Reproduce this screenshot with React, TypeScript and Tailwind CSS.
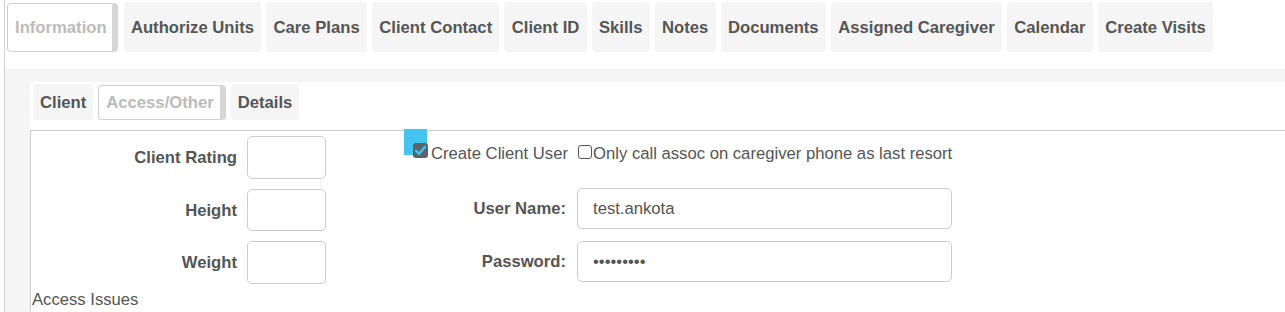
const topTabs = [
  'Information',
  'Authorize Units',
  'Care Plans',
  'Client Contact',
  'Client ID',
  'Skills',
  'Notes',
  'Documents',
  'Assigned Caregiver',
  'Calendar',
  'Create Visits',
];

const subTabs = ['Client', 'Access/Other', 'Details'];

function Tab({ label, active, tall }: { label: string; active: boolean; tall?: boolean }) {
  if (active) {
    return (
      <div
        className={`${tall ? 'h-[49px] pr-[5px] mr-[1px]' : 'h-[35px] pr-[6px]'} mt-[1px] flex items-center pl-[7px] bg-white rounded-[4px] border border-[#d0d0d0] border-r-[6px] border-r-[#d6d6d6] font-bold text-[#bbbbbb] whitespace-nowrap`}
      >
        {label}
      </div>
    );
  }
  return (
    <div
      className={`${tall ? 'h-[50px] px-[7.3px]' : 'h-[36px] px-[7px]'} flex items-center bg-[#f5f5f5] rounded-[4px] font-bold text-[#555555] whitespace-nowrap`}
    >
      {label}
    </div>
  );
}

function Checkbox({ checked }: { checked?: boolean }) {
  if (checked) {
    return (
      <span className="relative -top-[3px] inline-flex w-[15px] h-[15px] shrink-0">
        <span className="absolute left-[-9px] top-[-14px] w-[23px] h-[26px] bg-[#43c5f0]" />
        <span className="relative w-[15px] h-[15px] rounded-[3px] bg-[#5d6368] flex items-center justify-center">
          <svg width="13" height="13" viewBox="0 0 12 12" fill="none">
            <path d="M2 6.3l2.7 2.8L10.2 2.6" stroke="#43c5f0" strokeWidth="2.2" strokeLinecap="round" strokeLinejoin="round" />
          </svg>
        </span>
      </span>
    );
  }
  return (
    <span className="relative -top-[2px] inline-block w-[14px] h-[14px] shrink-0 rounded-[3px] border border-[#555555] bg-white" />
  );
}

function SmallField({ label, h }: { label: string; h: string }) {
  return (
    <div className="flex items-center">
      <label className="w-[206px] text-right font-bold text-[#555555]">{label}</label>
      <input
        readOnly
        className={`${h} ml-[10px] w-[79px] rounded-[5px] border border-[#cccccc] bg-white outline-none`}
      />
    </div>
  );
}

function WideField({ label, value, type }: { label: string; value: string; type?: string }) {
  return (
    <div className="flex items-center">
      <label className="w-[162px] text-right font-bold text-[#555555]">{label}</label>
      <input
        readOnly
        type={type ?? 'text'}
        value={value}
        className="ml-[11px] w-[375px] h-[41px] rounded-[5px] border border-[#cccccc] bg-white pl-[15px] text-[#555555] outline-none"
      />
    </div>
  );
}

export default function App() {
  return (
    <div className="min-h-[312px] bg-white font-['Liberation_Sans',Arial,sans-serif] text-[16.67px] leading-[19px] text-[#555555]">
      <div className="ml-[4px] min-h-[312px] border-l border-[#d4d4d4]">
        {/* 主标签 */}
        <div className="flex gap-[5px] pl-[2px] pt-[2px]">
          {topTabs.map((t, i) => (
            <Tab key={t} label={t} active={i === 0} tall />
          ))}
        </div>

        <div className="mt-[17px] bg-[#f5f5f5] pt-[13px] pl-[25px]">
          <div className="bg-white">
            {/* 子标签 */}
            <div className="flex gap-[5px] pl-[3px] pt-[2px]">
              {subTabs.map((t, i) => (
                <Tab key={t} label={t} active={i === 1} />
              ))}
            </div>

            <div className="mt-[10px] border-t border-l border-[#cccccc] pb-[20px]">
              <div className="flex">
                <div className="w-[373px] pt-[5px] flex flex-col gap-[10px]">
                  <SmallField label="Client Rating" h="h-[43px]" />
                  <SmallField label="Height" h="h-[42px]" />
                  <SmallField label="Weight" h="h-[43px]" />
                </div>

                <div className="pt-[13px]">
                  <div className="flex items-center pl-[9px]">
                    <Checkbox checked />
                    <span className="ml-[3px]">Create Client User</span>
                    <span className="ml-[10px] flex">
                      <Checkbox />
                    </span>
                    <span className="ml-[1px]">Only call assoc on caregiver phone as last resort</span>
                  </div>
                  <div className="mt-[25px] flex flex-col gap-[12px]">
                    <WideField label="User Name:" value="test.ankota" />
                    <WideField label="Password:" value="123456789" type="password" />
                  </div>
                </div>
              </div>

              <div className="mt-[6px] pl-[1px]">Access Issues</div>
            </div>
          </div>
        </div>
      </div>
    </div>
  );
}
